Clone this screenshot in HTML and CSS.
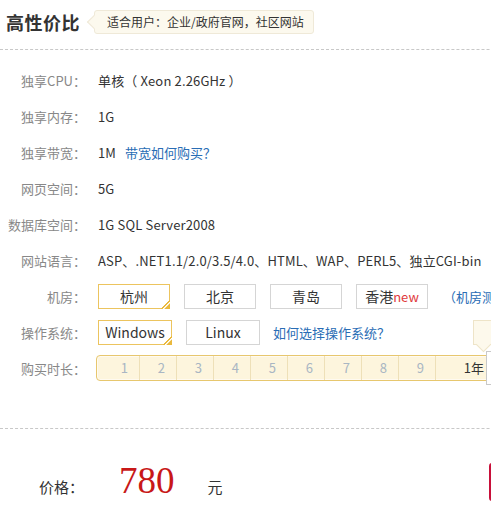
FILE: index.html
```html
<!DOCTYPE html>
<html lang="zh-CN">
<head>
<meta charset="utf-8">
<title>高性价比</title>
<link rel="stylesheet" href="styles.css">
</head>
<body>
<div class="page">
  <div class="head">
    <h2 class="title">高性价比</h2>
    <span class="tag">适合用户：企业/政府官网，社区网站</span>
  </div>
  <div class="specs">
    <div class="row"><span class="label">独享CPU：</span><span class="value">单核（ Xeon 2.26GHz ）</span></div>
    <div class="row"><span class="label">独享内存：</span><span class="value">1G</span></div>
    <div class="row"><span class="label">独享带宽：</span><span class="value">1M</span><a class="link">带宽如何购买？</a></div>
    <div class="row"><span class="label">网页空间：</span><span class="value">5G</span></div>
    <div class="row"><span class="label">数据库空间：</span><span class="value">1G SQL Server2008</span></div>
    <div class="row"><span class="label">网站语言：</span><span class="value">ASP、.NET1.1/2.0/3.5/4.0、HTML、WAP、PERL5、独立CGI-bin</span></div>
    <div class="row">
      <span class="label">机房：</span>
      <div class="opts">
        <span class="opt sel">杭州</span>
        <span class="opt">北京</span>
        <span class="opt">青岛</span>
        <span class="opt">香港<em class="new">new</em></span>
      </div>
      <a class="link room">（机房测速）</a>
    </div>
    <div class="row">
      <span class="label">操作系统：</span>
      <div class="opts">
        <span class="opt sel os">Windows</span>
        <span class="opt os">Linux</span>
      </div>
      <a class="link oslink">如何选择操作系统？</a>
    </div>
    <div class="row">
      <span class="label">购买时长：</span>
      <div class="slider">
        <div class="track">
          <span class="cell">1</span><span class="cell">2</span><span class="cell">3</span><span class="cell">4</span><span class="cell">5</span><span class="cell">6</span><span class="cell">7</span><span class="cell">8</span><span class="cell">9</span><span class="cell year">1年</span><span class="cell year">2年</span>
        </div>
        <span class="tip"></span>
        <span class="handle"></span>
      </div>
    </div>
  </div>
  <div class="price">
    <span class="plabel">价格：</span>
    <span class="num">780</span>
    <span class="unit">元</span>
    <span class="buy"></span>
  </div>
</div>
</body>
</html>
```
FILE: styles.css
```css
html, body { margin: 0; padding: 0; background: #fff; }
body { overflow: hidden; font-family: "Noto Sans CJK SC", "Noto Sans", sans-serif; font-size: 13px; color: #333; }
.page { width: 640px; }
.head { display: flex; align-items: center; height: 49px; border-bottom: 1px dashed #c8c8c8; padding-left: 6px; }
.title { margin: 0 0 6px; font-size: 18px; font-weight: bold; color: #333; letter-spacing: 0.5px; line-height: 24px; }
.tag { position: relative; margin: 0 0 6px 14px; height: 22px; line-height: 22px; padding: 0 9px 0 12px; background: #fcf9ee; border: 1px solid #efe9d8; border-radius: 3px; font-size: 12px; color: #333; }
.tag::before { content: ""; position: absolute; left: -6px; top: 6px; width: 9px; height: 9px; background: #fcf9ee; border-left: 1px solid #efe9d8; border-bottom: 1px solid #efe9d8; transform: rotate(45deg); }
.specs { padding-top: 12px; height: 366px; border-bottom: 1px dashed #c8c8c8; }
.row { display: flex; align-items: center; height: 36px; white-space: nowrap; }
.label { width: 86px; text-align: right; color: #888; flex: none; margin-right: 12px; }
.value { color: #333; letter-spacing: 0.15px; }
.link { color: #2a6db5; margin-left: 9px; }
.opts { display: flex; gap: 14px; }
.opt { position: relative; box-sizing: border-box; width: 72px; height: 25px; line-height: 23px; text-align: center; border: 1px solid #d5d5d5; background: #fff; color: #333; font-size: 14px; }
.opt.os { width: 74px; }
.opt.sel { border-color: #ecc45e; }
.opt.sel::after { content: ""; position: absolute; right: -1px; bottom: -1px; width: 9px; height: 9px; background: linear-gradient(135deg, transparent 48%, #eab93e 50%, #eab93e 58%, #fff 60%, #fff 66%, #eab93e 68%); }
.new { font-style: normal; color: #e0393c; font-size: 13px; }
.room { margin-left: 15px; }
.oslink { margin-left: 13px; }
.slider { position: relative; margin-left: -2px; }
.track { display: flex; height: 24px; border: 1px solid #e7c76e; border-radius: 4px; background: #fdf5dd; box-shadow: inset 0 0 0 1px #fffaf0; padding-left: 6px; }
.cell { box-sizing: border-box; width: 37px; text-align: right; padding-right: 11px; line-height: 24px; color: #a9b6c3; border-right: 1px solid #eee0b8; font-size: 13px; }
.cell.year { width: 58px; color: #333; padding-right: 9px; }
.tip { position: absolute; left: 377px; top: -35px; width: 30px; height: 23px; background: #fdf9ec; border: 1px solid #eee4c8; }
.tip::after { content: ""; position: absolute; left: 4px; bottom: -6px; width: 10px; height: 10px; background: #fdf9ec; border-right: 1px solid #eee4c8; border-bottom: 1px solid #eee4c8; transform: rotate(45deg); }
.handle { position: absolute; left: 390px; top: -4px; width: 16px; height: 32px; background: #fff; border: 1px solid #c9c9c9; }
.price { position: relative; display: flex; align-items: baseline; height: 84px; }
.plabel { margin-left: 39px; margin-top: 47px; font-size: 15px; color: #333; }
.num { margin-left: 35px; font-family: "Liberation Serif", serif; font-size: 37px; color: #c81818; }
.unit { margin-left: 33px; font-size: 15px; color: #333; }
.buy { position: absolute; left: 489px; top: 34px; width: 60px; height: 38px; background: #c8103a; border-radius: 3px; }
```
